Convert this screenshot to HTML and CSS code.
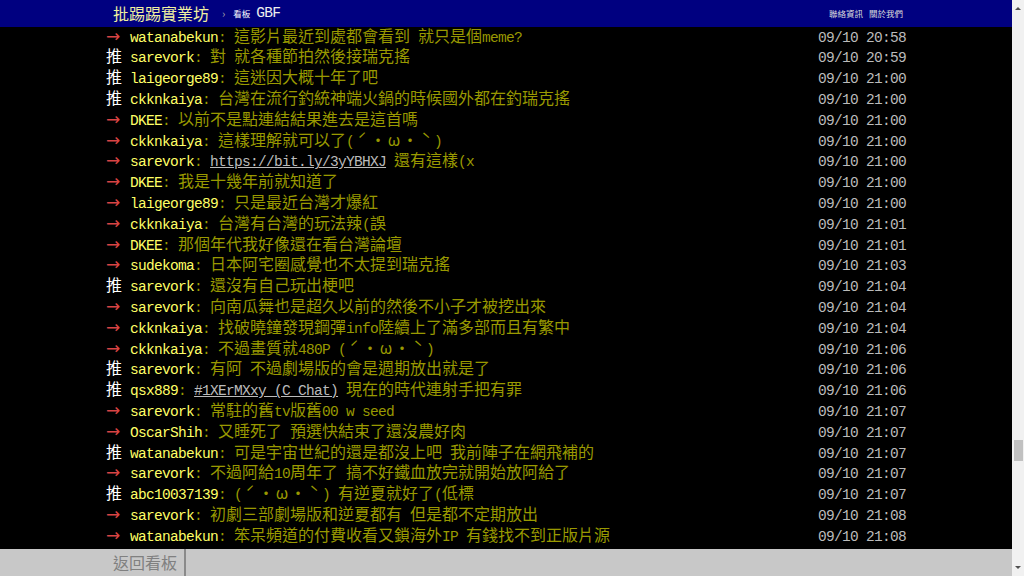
FILE: index.html
```html
<!DOCTYPE html>
<html lang="zh-Hant">
<head>
<meta charset="utf-8">
<title>GBF - 批踢踢實業坊</title>
<link rel="stylesheet" href="styles.css">
</head>
<body>
<div class="page">
  <div class="topbar">
    <a class="logo" href="#">批踢踢實業坊</a>
    <span class="sep">›</span>
    <span class="label">看板</span>
    <a class="board" href="#">GBF</a>
    <div class="links"><a href="#">聯絡資訊</a><a href="#">關於我們</a></div>
  </div>
  <div class="content">
    <div class="screen">
<div class="push"><span class="tag t1">→</span><span class="uid">watanabekun</span><span class="txt"><span class="a">: </span>這影片最近到處都會看到<span class="a"> </span>就只是個<span class="a">meme?</span></span><span class="time">09/10 20:58</span></div>
<div class="push"><span class="tag t0">推</span><span class="uid">sarevork</span><span class="txt"><span class="a">: </span>對<span class="a"> </span>就各種節拍然後接瑞克搖</span><span class="time">09/10 20:59</span></div>
<div class="push"><span class="tag t0">推</span><span class="uid">laigeorge89</span><span class="txt"><span class="a">: </span>這迷因大概十年了吧</span><span class="time">09/10 21:00</span></div>
<div class="push"><span class="tag t0">推</span><span class="uid">ckknkaiya</span><span class="txt"><span class="a">: </span>台灣在流行釣統神端火鍋的時候國外都在釣瑞克搖</span><span class="time">09/10 21:00</span></div>
<div class="push"><span class="tag t1">→</span><span class="uid">DKEE</span><span class="txt"><span class="a">: </span>以前不是點連結結果進去是這首嗎</span><span class="time">09/10 21:00</span></div>
<div class="push"><span class="tag t1">→</span><span class="uid">ckknkaiya</span><span class="txt"><span class="a">: </span>這樣理解就可以了<span class="a">(</span><span class="w">ˊ</span><span class="w">・</span><span class="w">ω</span><span class="w">・</span><span class="w">ˋ</span><span class="a">)</span></span><span class="time">09/10 21:00</span></div>
<div class="push"><span class="tag t1">→</span><span class="uid">sarevork</span><span class="txt"><span class="a">: </span><a class="a link" href="#">https://bit.ly/3yYBHXJ</a><span class="a"> </span>還有這樣<span class="a">(x</span></span><span class="time">09/10 21:00</span></div>
<div class="push"><span class="tag t1">→</span><span class="uid">DKEE</span><span class="txt"><span class="a">: </span>我是十幾年前就知道了</span><span class="time">09/10 21:00</span></div>
<div class="push"><span class="tag t1">→</span><span class="uid">laigeorge89</span><span class="txt"><span class="a">: </span>只是最近台灣才爆紅</span><span class="time">09/10 21:00</span></div>
<div class="push"><span class="tag t1">→</span><span class="uid">ckknkaiya</span><span class="txt"><span class="a">: </span>台灣有台灣的玩法辣<span class="a">(</span>誤</span><span class="time">09/10 21:01</span></div>
<div class="push"><span class="tag t1">→</span><span class="uid">DKEE</span><span class="txt"><span class="a">: </span>那個年代我好像還在看台灣論壇</span><span class="time">09/10 21:01</span></div>
<div class="push"><span class="tag t1">→</span><span class="uid">sudekoma</span><span class="txt"><span class="a">: </span>日本阿宅圈感覺也不太提到瑞克搖</span><span class="time">09/10 21:03</span></div>
<div class="push"><span class="tag t0">推</span><span class="uid">sarevork</span><span class="txt"><span class="a">: </span>還沒有自己玩出梗吧</span><span class="time">09/10 21:04</span></div>
<div class="push"><span class="tag t1">→</span><span class="uid">sarevork</span><span class="txt"><span class="a">: </span>向南瓜舞也是超久以前的然後不小子才被挖出來</span><span class="time">09/10 21:04</span></div>
<div class="push"><span class="tag t1">→</span><span class="uid">ckknkaiya</span><span class="txt"><span class="a">: </span>找破曉鐘發現鋼彈<span class="a">info</span>陸續上了滿多部而且有繁中</span><span class="time">09/10 21:04</span></div>
<div class="push"><span class="tag t1">→</span><span class="uid">ckknkaiya</span><span class="txt"><span class="a">: </span>不過畫質就<span class="a">480P (</span><span class="w">ˊ</span><span class="w">・</span><span class="w">ω</span><span class="w">・</span><span class="w">ˋ</span><span class="a">)</span></span><span class="time">09/10 21:06</span></div>
<div class="push"><span class="tag t0">推</span><span class="uid">sarevork</span><span class="txt"><span class="a">: </span>有阿<span class="a"> </span>不過劇場版的會是週期放出就是了</span><span class="time">09/10 21:06</span></div>
<div class="push"><span class="tag t0">推</span><span class="uid">qsx889</span><span class="txt"><span class="a">: </span><a class="a link" href="#">#1XErMXxy (C_Chat)</a><span class="a"> </span>現在的時代連射手把有罪</span><span class="time">09/10 21:06</span></div>
<div class="push"><span class="tag t1">→</span><span class="uid">sarevork</span><span class="txt"><span class="a">: </span>常駐的舊<span class="a">tv</span>版舊<span class="a">00 w seed</span></span><span class="time">09/10 21:07</span></div>
<div class="push"><span class="tag t1">→</span><span class="uid">OscarShih</span><span class="txt"><span class="a">: </span>又睡死了<span class="a"> </span>預選快結束了還沒農好肉</span><span class="time">09/10 21:07</span></div>
<div class="push"><span class="tag t0">推</span><span class="uid">watanabekun</span><span class="txt"><span class="a">: </span>可是宇宙世紀的還是都沒上吧<span class="a"> </span>我前陣子在網飛補的</span><span class="time">09/10 21:07</span></div>
<div class="push"><span class="tag t1">→</span><span class="uid">sarevork</span><span class="txt"><span class="a">: </span>不過阿給<span class="a">10</span>周年了<span class="a"> </span>搞不好鐵血放完就開始放阿給了</span><span class="time">09/10 21:07</span></div>
<div class="push"><span class="tag t0">推</span><span class="uid">abc10037139</span><span class="txt"><span class="a">: (</span><span class="w">ˊ</span><span class="w">・</span><span class="w">ω</span><span class="w">・</span><span class="w">ˋ</span><span class="a">) </span>有逆夏就好了<span class="a">(</span>低標</span><span class="time">09/10 21:07</span></div>
<div class="push"><span class="tag t1">→</span><span class="uid">sarevork</span><span class="txt"><span class="a">: </span>初劇三部劇場版和逆夏都有<span class="a"> </span>但是都不定期放出</span><span class="time">09/10 21:08</span></div>
<div class="push"><span class="tag t1">→</span><span class="uid">watanabekun</span><span class="txt"><span class="a">: </span>笨呆頻道的付費收看又鎖海外<span class="a">IP </span>有錢找不到正版片源</span><span class="time">09/10 21:08</span></div>
    </div>
  </div>
  <div class="footer">
    <a class="back" href="#">返回看板</a>
    <div class="bar"></div>
  </div>
</div>
<div class="scrollbar">
  <div class="sb-btn"><span class="arrow-up"></span></div>
  <div class="sb-track"><div class="sb-thumb"></div></div>
  <div class="sb-btn"><span class="arrow-down"></span></div>
</div>
</body>
</html>
```
FILE: styles.css
```css
* { box-sizing: border-box; }
html, body {
  margin: 0;
  height: 100%;
  overflow: hidden;
  background: #000;
}
body {
  display: flex;
  font-family: "Noto Sans CJK TC", "Noto Sans CJK SC", sans-serif;
}
a { text-decoration: none; color: inherit; }

.page {
  flex: 1;
  min-width: 0;
  display: flex;
  flex-direction: column;
  position: relative;
}

.topbar {
  height: 26.7px;
  flex: none;
  background: #000080;
  display: flex;
  align-items: center;
  padding: 0 109px 0 113px;
  white-space: nowrap;
}
.logo {
  color: #f0f0a0;
  font-size: 16px;
  line-height: 1;
}
.sep {
  color: #aaa;
  font-size: 11px;
  margin-left: 13px;
  line-height: 1;
}
.label {
  color: #fff;
  font-size: 8.5px;
  margin-left: 8px;
  line-height: 1;
}
.board {
  color: #eee;
  font-family: "Liberation Mono", monospace;
  font-size: 14.5px;
  letter-spacing: -0.7px;
  margin-left: 6px;
  line-height: 1;
}
.links {
  margin-left: auto;
  display: flex;
  gap: 6px;
  font-size: 8.5px;
  color: #ddd;
  line-height: 1;
}

.content {
  flex: 1;
  overflow: hidden;
}
.screen {
  width: 800px;
  margin: -2px auto 0;
}
.push {
  display: flex;
  align-items: baseline;
  height: 20.8px;
  line-height: 20.8px;
  font-size: 16px;
  white-space: nowrap;
}
.tag { width: 24px; flex: none; }
.t1 {
  color: #d84444;
  font-family: "DejaVu Sans", sans-serif;
  font-size: 17px;
}
.t0 { color: #fff; }
.uid {
  color: #ff6;
  font-family: "Liberation Mono", monospace;
  font-size: 14.5px;
  letter-spacing: -0.7px;
}
.txt {
  color: #990;
  flex: 1;
  min-width: 0;
}
.a {
  font-family: "Liberation Mono", monospace;
  font-size: 14.5px;
  letter-spacing: -0.7px;
}
.w {
  display: inline-block;
  width: 16px;
  text-align: center;
}
.link {
  color: #bbb;
  text-decoration: underline;
}
.time {
  flex: none;
  color: #bbb;
  font-family: "Liberation Mono", monospace;
  font-size: 14.5px;
  letter-spacing: -0.7px;
}

.footer {
  position: absolute;
  left: 0;
  right: 0;
  bottom: 0;
  height: 27px;
  background: rgba(208, 208, 208, 0.96);
  display: flex;
}
.back {
  width: 186px;
  padding-left: 113px;
  border-right: 2px solid #8a8a8a;
  color: #808080;
  font-size: 16px;
  line-height: 27px;
}
.bar { flex: 1; }

.scrollbar {
  width: 12px;
  flex: none;
  background: #f1f1f1;
  display: flex;
  flex-direction: column;
}
.sb-btn {
  height: 17px;
  display: flex;
  align-items: center;
  justify-content: center;
}
.arrow-up {
  width: 0;
  height: 0;
  border-left: 3px solid transparent;
  border-right: 3px solid transparent;
  border-bottom: 3px solid #505050;
}
.arrow-down {
  width: 0;
  height: 0;
  border-left: 3px solid transparent;
  border-right: 3px solid transparent;
  border-top: 3px solid #505050;
}
.sb-track {
  flex: 1;
  padding-top: 423px;
  display: flex;
  justify-content: center;
}
.sb-thumb {
  width: 9px;
  height: 21px;
  margin-left: 1px;
  background: #c1c1c1;
}
```
